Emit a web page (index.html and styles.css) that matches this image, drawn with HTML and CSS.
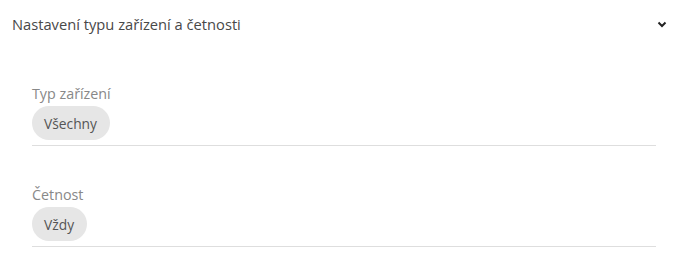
FILE: index.html
```html
<!DOCTYPE html>
<html>
<head>
  <title>Nastavení typu zařízení a četnosti</title>
  <link rel="stylesheet" href="styles.css">
</head>
<body>
  <div class="panel">
    <div class="panel-header">
      <span class="panel-title">Nastavení typu zařízení a četnosti</span>
      <svg class="chevron" width="10" height="7" viewBox="0 0 10 7">
        <path d="M1.5 1.5 L5 5 L8.5 1.5" fill="none" stroke="#222" stroke-width="2"/>
      </svg>
    </div>

    <div class="panel-body">
      <div class="field">
        <div class="field-label">Typ zařízení</div>
        <span class="chip">Všechny</span>
      </div>

      <div class="field">
        <div class="field-label">Četnost</div>
        <span class="chip">Vždy</span>
      </div>
    </div>
  </div>
</body>
</html>
```

FILE: styles.css
```css
body { margin: 0; background: #fff; font-family: "Open Sans", "Noto Sans", sans-serif; }
.panel { width: 682px; }
.panel-header { display: flex; justify-content: space-between; align-items: center; padding: 14px 15px 11px 12px; }
.panel-title { font-size: 14.7px; line-height: 20px; color: #484848; }
.chevron { display: block; }
.panel-body { padding: 0 26px 0 32px; }
.field { padding: 39px 0 5px; border-bottom: 1px solid #dedede; }
.field-label { font-size: 14.3px; line-height: 20px; color: #888; margin-bottom: 2px; }
.chip { display: inline-flex; align-items: center; height: 34px; padding: 0 13px 0 12px; border-radius: 17px; background: #e6e6e6; color: #555; font-size: 13.8px; }
```
